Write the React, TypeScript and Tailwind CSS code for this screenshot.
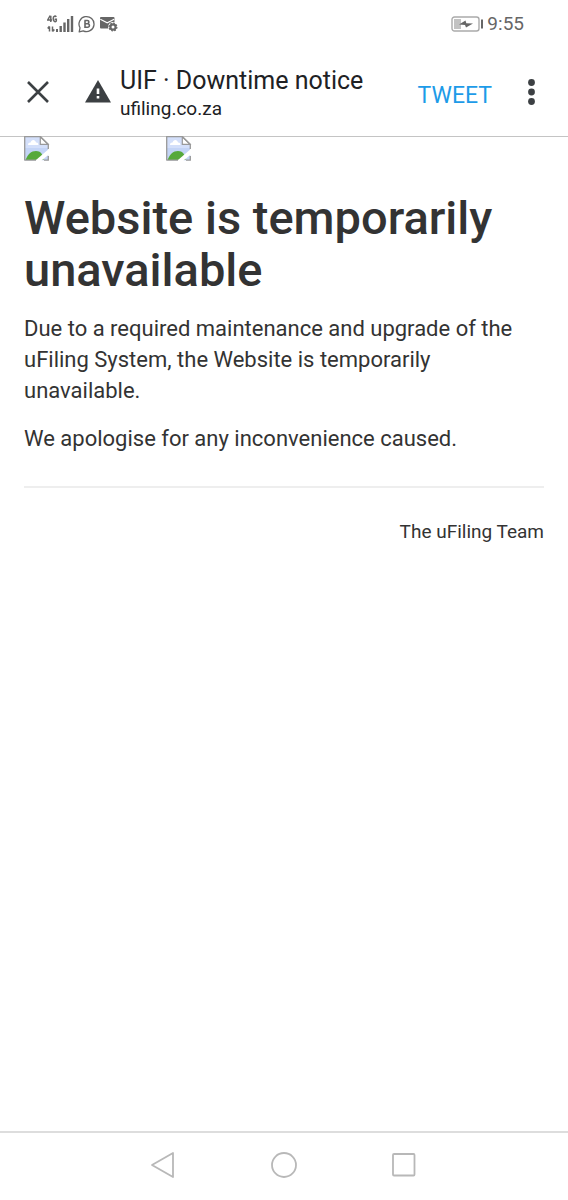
function SignalIcon() {
  return (
    <svg width="27" height="18" viewBox="0 0 27 18" fill="#666" aria-hidden="true">
      <path d="M3.2 .5 .7 5H5M3.8 .8V7" fill="none" stroke="#666" strokeWidth="1.5" />
      <path d="M9.2 2C8.6 .7 6.2 .6 6.2 3.8S9 7.2 9.3 5.8V4.2H7.6" fill="none" stroke="#666" strokeWidth="1.5" />
      <path d="M2.5 16.5V11.5M.7 13.5 2.5 11.3M5.5 11.5V16.5M5.5 16.6 7.4 14.4" fill="none" stroke="#666" strokeWidth="1.5" />
      <rect x="9" y="14" width="2" height="3" />
      <rect x="12.5" y="11" width="2.4" height="6" />
      <rect x="16.3" y="7.5" width="2.4" height="9.5" />
      <rect x="20" y="4" width="2.4" height="13" />
      <rect x="23.8" y="1" width="2.4" height="16" />
    </svg>
  );
}

function BusinessChatIcon() {
  return (
    <svg width="18" height="18" viewBox="0 0 18 18" fill="none" stroke="#666" aria-hidden="true">
      <path d="M1.2 16.8 2 12.8A7.5 7.5 0 1 1 5.2 15.8Z" strokeWidth="1.3" strokeLinejoin="round" />
      <path d="M7 5.5V12.3H9.6A1.8 1.8 0 0 0 9.6 8.7H7M9.3 8.7A1.6 1.6 0 0 0 9.3 5.5H6.4" strokeWidth="1.6" />
    </svg>
  );
}

function MailSettingsIcon() {
  return (
    <svg width="18" height="16" viewBox="0 0 18 16" aria-hidden="true">
      <rect x="0" y="1" width="14.5" height="11.5" rx="1" fill="#666" />
      <path d="M.3 3.2 7.2 6.8 14.2 3.2" fill="none" stroke="#fff" strokeWidth="1.1" />
      <circle cx="13" cy="11" r="4.9" fill="#fff" />
      <circle cx="13" cy="11" r="2.6" fill="none" stroke="#666" strokeWidth="2.2" />
      <circle cx="13" cy="11" r="3.9" fill="none" stroke="#666" strokeWidth="1.2" strokeDasharray="1.8 1.2" />
    </svg>
  );
}

function BatteryIcon() {
  return (
    <svg width="32" height="16" viewBox="0 0 32 16" aria-hidden="true">
      <rect x="1" y="1" width="27" height="14" rx="2.5" fill="#fff" stroke="#aaa" strokeWidth="1.4" />
      <rect x="3" y="3" width="7" height="10" fill="#c2c2c2" />
      <path d="M8 8.6 14.5 4.6 15.3 7.2 22 7.6 15 11.4 14 8.9Z" fill="#666" />
      <rect x="30" y="3.5" width="2" height="9" fill="#666" />
    </svg>
  );
}

function BrokenImage({ label }: { label: string }) {
  return (
    <svg className="block" width="26" height="25" viewBox="0 0 26 25" role="img" aria-label={label}>
      <path d="M.7 .7H16.5L24.3 8V24.3H.7Z" fill="#c3d4f6" />
      <path d="M1 1H16V9H24V12H1Z" fill="#d3dffa" />
      <path d="M4 9C4 6.8 5.8 6.3 6.6 6.6 7.2 3.2 11.4 3.2 12 6.6 14 6.4 14.4 8 14.4 9Z" fill="#fff" />
      <path d="M1.5 24C4 18 7 15 12 15 16.5 15 19 18 19.5 24Z" fill="#56a93b" />
      <path d="M16.3 .8V8.3H24Z" fill="#fff" stroke="#999" strokeWidth="1.2" />
      <path d="M.7 24.5V.7H16.5L24.3 8.3V13M.7 24.2H14M20 24.2H24.3V20" fill="none" stroke="#999" strokeWidth="1.3" />
      <path d="M26 12 12 24V25H17L26 17.5Z" fill="#fff" />
    </svg>
  );
}

export default function App() {
  return (
    <div className="flex min-h-screen flex-col bg-white font-['Roboto',sans-serif] text-[#333]">
      <div className="flex h-12 items-center justify-between pr-11 pl-[47px] text-[#666]">
        <div className="flex items-center gap-1">
          <SignalIcon />
          <BusinessChatIcon />
          <MailSettingsIcon />
        </div>
        <div className="flex items-center gap-1">
          <BatteryIcon />
          <span className="text-[19px] leading-6">9:55</span>
        </div>
      </div>

      <header className="flex h-[89px] items-center border-b border-[#c4c4c4] px-6">
        <button type="button" aria-label="Close" className="mr-8 p-0.5">
          <svg width="24" height="24" viewBox="0 0 24 24" stroke="#3c4043" strokeWidth="2.6" aria-hidden="true">
            <path d="M2 2 22 22M22 2 2 22" />
          </svg>
        </button>
        <svg className="mr-2 shrink-0" width="28" height="24" viewBox="0 0 28 24" aria-hidden="true">
          <path d="M14 0 27 22.5H1Z" fill="#3c4043" />
          <path d="M14 8.5V14M14 16V18.5" stroke="#fff" strokeWidth="2.6" />
        </svg>
        <div className="min-w-0 flex-1 pt-0.5 text-[#202124]">
          <div className="text-[25px] leading-8">UIF · Downtime notice</div>
          <div className="text-[19px] leading-6">ufiling.co.za</div>
        </div>
        <button type="button" className="mt-2 mr-[26px] text-[23px] leading-8 text-[#1d9be8]">
          TWEET
        </button>
        <button type="button" aria-label="More options" className="px-2">
          <svg width="10" height="28" viewBox="0 0 10 28" fill="#3c4043" aria-hidden="true">
            <circle cx="5.5" cy="4.5" r="3.4" />
            <circle cx="5.5" cy="14" r="3.4" />
            <circle cx="5.5" cy="23.5" r="3.4" />
          </svg>
        </button>
      </header>

      <main className="-mt-px flex-1 px-6">
        <div className="flex gap-29">
          <BrokenImage label="Logo" />
          <BrokenImage label="Banner" />
        </div>
        <h1 className="mt-[31px] text-[47px] leading-[52px] font-medium">Website is temporarily unavailable</h1>
        <p className="mt-[17px] text-[22px] leading-[31px]">
          Due to a required maintenance and upgrade of the uFiling System, the Website is temporarily unavailable.
        </p>
        <p className="mt-[17px] text-[22px] leading-[31px]">We apologise for any inconvenience caused.</p>
        <hr className="mt-8 border-t-2 border-[#eee]" />
        <p className="mt-8 text-right text-[19px] leading-6">The uFiling Team</p>
      </main>

      <nav
        aria-label="System"
        className="flex h-[69px] items-center justify-center gap-[92px] border-t-2 border-[#ddd] pb-1"
      >
        <button type="button" aria-label="Back">
          <svg width="28" height="28" viewBox="0 0 28 28" fill="none" stroke="#b8b8b8" strokeWidth="1.8" strokeLinejoin="round" aria-hidden="true">
            <path d="M23 2V26L2 14Z" />
          </svg>
        </button>
        <button type="button" aria-label="Home">
          <svg width="28" height="28" viewBox="0 0 28 28" fill="none" stroke="#b8b8b8" strokeWidth="1.8" aria-hidden="true">
            <circle cx="14" cy="14" r="12" />
          </svg>
        </button>
        <button type="button" aria-label="Recent apps">
          <svg width="28" height="28" viewBox="0 0 28 28" fill="none" stroke="#b8b8b8" strokeWidth="1.8" aria-hidden="true">
            <rect x="3" y="3" width="21.5" height="21.5" rx="1" />
          </svg>
        </button>
      </nav>
    </div>
  );
}
